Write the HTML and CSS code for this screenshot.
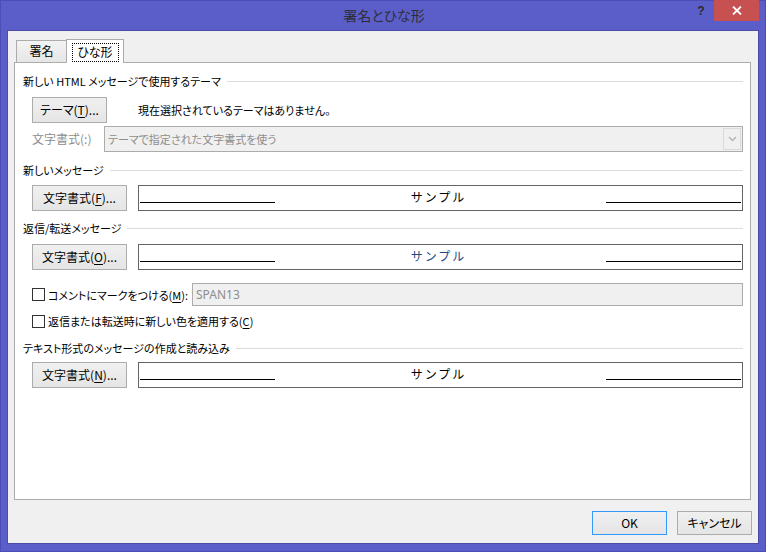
FILE: index.html
```html
<!DOCTYPE html>
<html lang="ja">
<head>
<meta charset="utf-8">
<title>署名とひな形</title>
<link rel="stylesheet" href="styles.css">
</head>
<body>
<div class="window">
  <div class="titlebar">
    <div class="tb-spacer"></div>
    <div class="title">署名とひな形</div>
    <div class="controls">
      <span class="help">?</span>
      <span class="close"><svg width="10" height="9" viewBox="0 0 10 9"><path d="M1 0.5 L9 8.5 M9 0.5 L1 8.5" stroke="#fff" stroke-width="1.8" fill="none"/></svg></span>
    </div>
  </div>
  <div class="client">
    <div class="tabs">
      <div class="tab">署名</div>
      <div class="tab active"><span class="focus">ひな形</span></div>
    </div>
    <div class="panel">
      <div class="section mt-0"><span>新しい HTML メッセージで使用するテーマ</span><i class="rule"></i></div>
      <div class="row mt-8">
        <button class="btn btn-theme">テーマ(<u>T</u>)...</button>
        <span class="status">現在選択されているテーマはありません。</span>
      </div>
      <div class="row mt-3">
        <span class="dlabel">文字書式(:)</span>
        <div class="select">
          <span class="select-text">テーマで指定された文字書式を使う</span>
          <span class="drop"><svg width="9" height="6" viewBox="0 0 9 6"><path d="M1 1 L4.5 4.5 L8 1" stroke="#b4b4b4" stroke-width="1.5" fill="none"/></svg></span>
        </div>
      </div>

      <div class="section mt-10"><span>新しいメッセージ</span><i class="rule"></i></div>
      <div class="row mt-7">
        <button class="btn btn-font">文字書式(<u>F</u>)...</button>
        <div class="sample"><i class="sline"></i><span class="stext">サンプル</span><i class="sline"></i></div>
      </div>

      <div class="section mt-9"><span>返信/転送メッセージ</span><i class="rule"></i></div>
      <div class="row mt-8">
        <button class="btn btn-font">文字書式(<u>O</u>)...</button>
        <div class="sample"><i class="sline"></i><span class="stext blue">サンプル</span><i class="sline"></i></div>
      </div>

      <div class="row cbrow mt-13">
        <span class="cb"></span>
        <span class="cblabel">コメントにマークをつける(<u>M</u>):</span>
        <div class="textbox">SPAN13</div>
      </div>
      <div class="row cbrow2 mt-7">
        <span class="cb"></span>
        <span class="cblabel2">返信または転送時に新しい色を適用する(<u>C</u>)</span>
      </div>

      <div class="section mt-11"><span>テキスト形式のメッセージの作成と読み込み</span><i class="rule"></i></div>
      <div class="row mt-6">
        <button class="btn btn-font">文字書式(<u>N</u>)...</button>
        <div class="sample"><i class="sline"></i><span class="stext">サンプル</span><i class="sline"></i></div>
      </div>
    </div>
    <div class="footer">
      <button class="btn btn-dlg btn-default">OK</button>
      <button class="btn btn-dlg">キャンセル</button>
    </div>
  </div>
</div>
</body>
</html>
```

FILE: styles.css
```css
* { box-sizing: border-box; }
html, body { margin: 0; padding: 0; }
body {
  width: 766px;
  height: 552px;
  overflow: hidden;
  font-family: "Noto Sans CJK JP", "Noto Sans", sans-serif;
  font-size: 12px;
  font-feature-settings: "palt";
  color: #000;
}
.window {
  width: 766px;
  height: 552px;
  background: #5b5ec8;
  border: 1px solid #4b4eb4;
  padding: 0 6px 7px 6px;
  display: flex;
  flex-direction: column;
}
.titlebar {
  height: 29px;
  display: grid;
  grid-template-columns: 1fr auto 1fr;
  align-items: start;
}
.title {
  font-size: 14px;
  line-height: 29px;
  color: #2e2e3a;
  padding-left: 2px;
}
.controls {
  justify-self: end;
  display: flex;
  margin-top: -1px;
}
.help {
  width: 26px;
  height: 21px;
  font-family: "Liberation Sans", sans-serif;
  font-weight: bold;
  font-size: 12px;
  line-height: 22px;
  text-align: center;
  color: #2a2a2a;
}
.close {
  width: 45px;
  height: 21px;
  background: #c75050;
  display: flex;
  align-items: center;
  justify-content: center;
}
.client {
  flex: 1;
  background: #f0f0f0;
  border: 1px solid #4a4ca8;
  padding: 8px 7px 8px 6px;
  display: flex;
  flex-direction: column;
}
.tabs {
  display: flex;
  height: 23px;
  padding-left: 2px;
  align-items: flex-end;
  position: relative;
  z-index: 1;
}
.tab {
  width: 51px;
  height: 22px;
  border: 1px solid #acacac;
  border-bottom: none;
  background: linear-gradient(#f3f3f3, #e6e6e6);
  text-align: center;
  line-height: 20px;
}
.tab.active {
  width: 58px;
  height: 24px;
  margin-left: -1px;
  margin-bottom: -1px;
  background: #fff;
  display: flex;
  align-items: flex-start;
  justify-content: center;
  padding-top: 3px;
}
.focus {
  display: block;
  width: 47px;
  height: 19px;
  line-height: 17px;
  outline: 1px dotted #000;
  outline-offset: -1px;
  color: #000;
}
.panel {
  flex: 1;
  background: #fff;
  border: 1px solid #acacac;
  padding: 10px 7px 0 8px;
  display: flex;
  flex-direction: column;
}
.section {
  display: flex;
  align-items: center;
  height: 16px;
  line-height: 16px;
  font-size: 11px;
  white-space: nowrap;
}
.rule {
  flex: 1;
  height: 1px;
  background: #dcdcdc;
  margin-left: 6px;
}
.row {
  display: flex;
  align-items: center;
  margin-left: 9px;
}
.mt-0 { margin-top: 0; }
.mt-3 { margin-top: 3px; }
.mt-6 { margin-top: 6px; }
.mt-7 { margin-top: 7px; }
.mt-8 { margin-top: 8px; }
.mt-9 { margin-top: 9px; }
.mt-10 { margin-top: 10px; }
.mt-11 { margin-top: 11px; }
.mt-13 { margin-top: 13px; }
.btn {
  font-family: inherit;
  font-size: 12px;
  font-feature-settings: "palt";
  color: #000;
  height: 26px;
  border: 1px solid #acacac;
  background: linear-gradient(#f0f0f0, #e5e5e5);
  padding: 0;
  margin: 0;
  line-height: 22px;
  text-align: center;
  flex: none;
}
.btn u { text-underline-offset: 2px; }
.btn-theme { width: 75px; margin-right: 31px; }
.btn-font { width: 95px; margin-right: 11px; }
.status { line-height: 16px; font-size: 11px; }
.dlabel {
  width: 72px;
  color: #8d8d8d;
  line-height: 16px;
}
.select {
  flex: 1;
  height: 26px;
  border: 1px solid #acacac;
  background: #f0f0f0;
  display: flex;
  align-items: stretch;
}
.select-text {
  flex: 1;
  color: #8d8d8d;
  font-size: 11px;
  line-height: 24px;
  padding-left: 3px;
}
.drop {
  width: 18px;
  margin: 1px;
  border: 1px solid #dadada;
  display: flex;
  align-items: center;
  justify-content: center;
}
.sample {
  flex: 1;
  height: 26px;
  border: 1px solid #646464;
  background: #fff;
  display: grid;
  grid-template-columns: 135px 1fr 135px;
  padding: 0 1px;
}
.sline {
  align-self: end;
  height: 1px;
  background: #000;
  margin-bottom: 7px;
}
.stext {
  text-align: center;
  font-feature-settings: normal;
  letter-spacing: 2px;
  line-height: 22px;
  padding-right: 4px;
}
.stext.blue { color: #1e4a86; }
.cbrow { height: 23px; }
.cbrow2 { height: 16px; }
.cb {
  width: 13px;
  height: 13px;
  border: 1px solid #333;
  background: #fff;
  flex: none;
}
.cblabel {
  width: 144px;
  margin-left: 3px;
  white-space: nowrap;
  font-size: 11px;
  line-height: 16px;
}
.cblabel2 {
  margin-left: 3px;
  white-space: nowrap;
  font-size: 11px;
  line-height: 16px;
}
.cblabel u, .cblabel2 u { text-underline-offset: 2px; }
.textbox {
  flex: 1;
  height: 23px;
  border: 1px solid #acacac;
  background: #f0f0f0;
  color: #8d8d8d;
  font-family: "Noto Sans", sans-serif;
  line-height: 21px;
  padding-left: 3px;
}
.footer {
  display: flex;
  justify-content: flex-end;
  gap: 10px;
  margin-top: 11px;
  margin-right: -1px;
}
.btn-dlg {
  width: 75px;
  height: 24px;
  line-height: 20px;
}
.btn-default { border-color: #3399ff; }
```
